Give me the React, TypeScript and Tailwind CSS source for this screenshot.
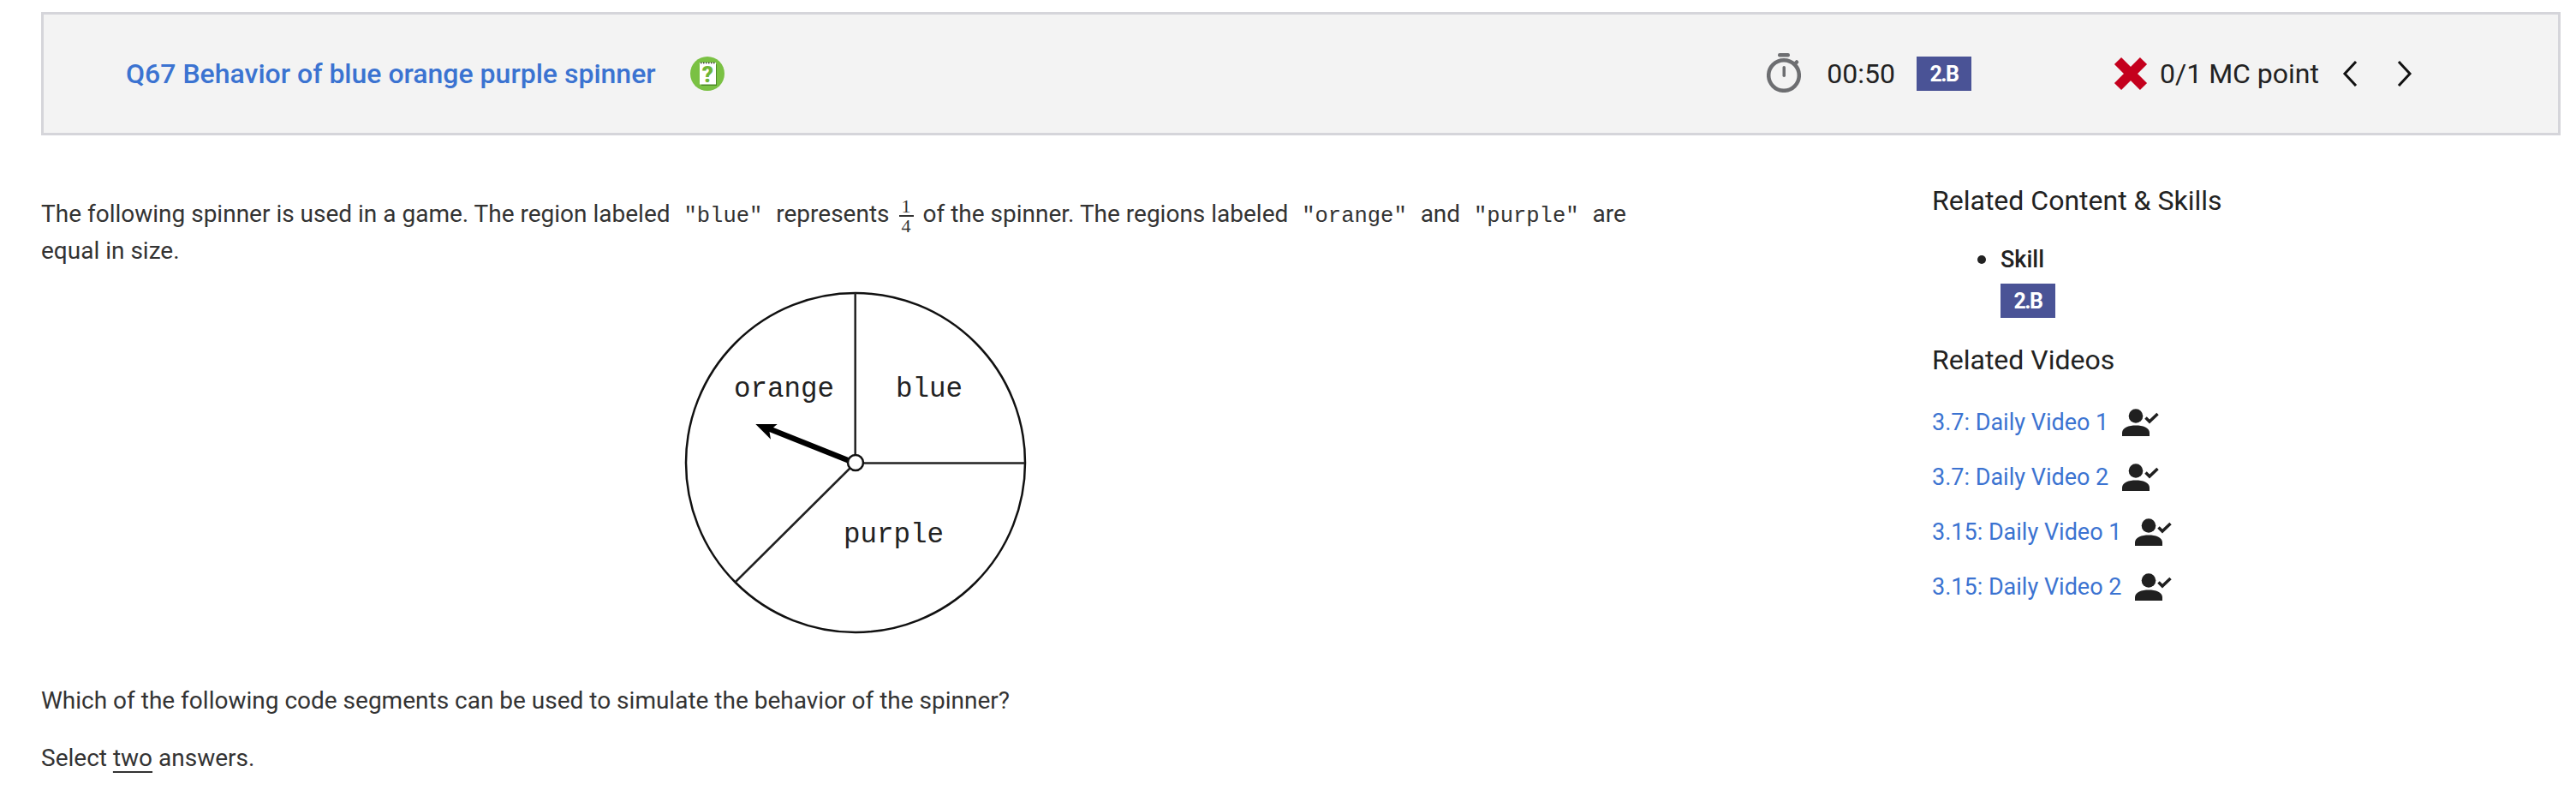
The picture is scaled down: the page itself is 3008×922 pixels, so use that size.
import { ReactNode } from "react";

function Badge() {
  return (
    <span className="flex h-10 w-16 items-center justify-center bg-[#4a5396] text-[25px] font-bold leading-none tracking-[-1.5px] text-white">
      2.B
    </span>
  );
}

function Code({ children }: { children: ReactNode }) {
  return (
    <code className="px-[9px] font-['Liberation_Mono',monospace] text-[25.500px] leading-none text-[#333]">
      {children}
    </code>
  );
}

function Fraction() {
  return (
    <span className="mx-[11px] -my-[16px] inline-flex flex-col items-center align-middle font-['Liberation_Serif',serif] text-[22px] leading-[21px]">
      <span className="border-b-2 border-[#333] px-[3px]">1</span>
      <span className="px-[3px]">4</span>
    </span>
  );
}

function NoteIcon() {
  return (
    <svg width="40" height="40" viewBox="0 0 40 40">
      <circle cx="20" cy="20" r="20" fill="#7ac143" />
      <path d="M13 9h18v25H13z" fill="#4d8a26" />
      <rect x="11" y="7" width="19" height="25.500" fill="#fff" />
      <path d="M12 7.500h17" stroke="#333" strokeWidth="1.500" strokeDasharray="1.500 1.500" />
      <text x="20.500" y="30" textAnchor="middle" fontFamily="Roboto, sans-serif" fontWeight="900" fontSize="26" fill="#6fb536">
        ?
      </text>
    </svg>
  );
}

function TimerIcon() {
  return (
    <svg width="40" height="46" viewBox="0 0 40 46" className="-mt-[3px] text-[#6d6e71]">
      <rect x="13" y="0" width="14" height="4.500" rx="2.200" fill="currentColor" />
      <circle cx="20" cy="26" r="17.800" fill="none" stroke="currentColor" strokeWidth="4.500" />
      <rect x="18.500" y="15" width="3.500" height="13" rx="1.700" fill="currentColor" />
      <path d="M32.500 13l2.500-2.500" stroke="currentColor" strokeWidth="4.500" strokeLinecap="round" />
    </svg>
  );
}

function WrongIcon() {
  return (
    <svg width="40" height="40" viewBox="0 0 40 40">
      <path d="M5 5l30 30M35 5L5 35" stroke="#c4001d" strokeWidth="11.500" />
    </svg>
  );
}

function WatchedIcon() {
  return (
    <svg width="43" height="32" viewBox="0 0 43 32" className="text-[#202020]">
      <circle cx="16" cy="8.500" r="8.300" fill="currentColor" />
      <path d="M0 32v-4c0-6 8-8.500 16-8.500s16 2.500 16 8.500v4z" fill="currentColor" />
      <path d="M27.500 10.500l4.500 4.500 9.500-9" fill="none" stroke="currentColor" strokeWidth="3.500" />
    </svg>
  );
}

function Spinner() {
  return (
    <svg width="400" height="400" viewBox="0 0 400 400" className="block">
      <circle cx="200" cy="200" r="198" fill="#fff" stroke="#111" strokeWidth="2.500" />
      <path d="M199.700 2v198M200 200.500h198M200 200L60 339" stroke="#222" strokeWidth="2.500" fill="none" />
      <path d="M192 197.500L98 160" stroke="#000" strokeWidth="6.500" />
      <path d="M83.300 155h25.400l-9.400 7.700 1.700 10z" fill="#000" />
      <circle cx="200" cy="200" r="9" fill="#fff" stroke="#111" strokeWidth="2.500" />
      <g fontFamily="'Liberation Mono', monospace" fontSize="32.500" fill="#222">
        <text x="58" y="123">orange</text>
        <text x="247" y="123">blue</text>
        <text x="186" y="293">purple</text>
      </g>
    </svg>
  );
}

const videos = [
  "3.7: Daily Video 1",
  "3.7: Daily Video 2",
  "3.15: Daily Video 1",
  "3.15: Daily Video 2",
];

export default function App() {
  return (
    <div className="min-h-[922px] overflow-hidden bg-white pl-12 pr-[18px] pt-[14px] font-['Roboto',sans-serif] text-[28px] text-[#333]">
      <header className="flex h-[144px] items-center border-[3px] border-[#d5d5da] bg-[#f3f3f3] pl-[96px]">
        <a className="text-[32px] font-medium text-[#3b73d1]">Q67 Behavior of blue orange purple spinner</a>
        <span className="ml-10"><NoteIcon /></span>
        <div className="ml-auto flex items-center">
          <TimerIcon />
          <span className="ml-[30px] text-[32px] text-[#222]">00:50</span>
          <span className="ml-[25px]"><Badge /></span>
          <span className="ml-[166px]"><WrongIcon /></span>
          <span className="ml-[14px] text-[32px] text-[#222]">0/1 MC point</span>
          <svg width="18" height="30" viewBox="0 0 18 30" className="ml-[27px]" fill="none" stroke="#111" strokeWidth="3"><path d="M16 1L3 15l13 14" /></svg>
          <svg width="18" height="30" viewBox="0 0 18 30" className="ml-[46px] mr-[170px]" fill="none" stroke="#111" strokeWidth="3"><path d="M2 1l13 14L2 29" /></svg>
        </div>
      </header>

      <div className="flex">
        <main className="w-[1900px] shrink-0 pt-[70px]">
          <p className="leading-[43px]">
            The following spinner is used in a game. The region labeled <Code>"blue"</Code> represents
            <Fraction />
            of the spinner. The regions labeled <Code>"orange"</Code> and <Code>"purple"</Code> are equal in size.
          </p>
          <div className="mt-[26px] flex justify-center pl-[2px]"><Spinner /></div>
          <p className="mt-[57px]">Which of the following code segments can be used to simulate the behavior of the spinner?</p>
          <p className="mt-[25px]">
            Select <span className="underline decoration-2 underline-offset-[6px]">two</span> answers.
          </p>
        </main>
        <aside className="ml-[308px] pt-[54px] text-[#222]">
          <h3 className="text-[32px] leading-[44px]">Related Content &amp; Skills</h3>
          <ul className="mt-[26px] pl-[53px] text-[27px] font-medium leading-[42px]">
            <li className="flex items-center gap-[17px]">
              <span className="h-[10px] w-[10px] rounded-full bg-[#222]" />
              Skill
            </li>
          </ul>
          <div className="ml-20 mt-[7px]"><Badge /></div>
          <h3 className="mt-[27px] text-[32px] leading-[44px]">Related Videos</h3>
          <ul className="mt-[31px] flex flex-col gap-[24px] text-[27px]">
            {videos.map((v) => (
              <li key={v} className="flex h-10 items-center gap-4">
                <a className="text-[#3b73d1]">{v}</a>
                <WatchedIcon />
              </li>
            ))}
          </ul>
        </aside>
      </div>
    </div>
  );
}
